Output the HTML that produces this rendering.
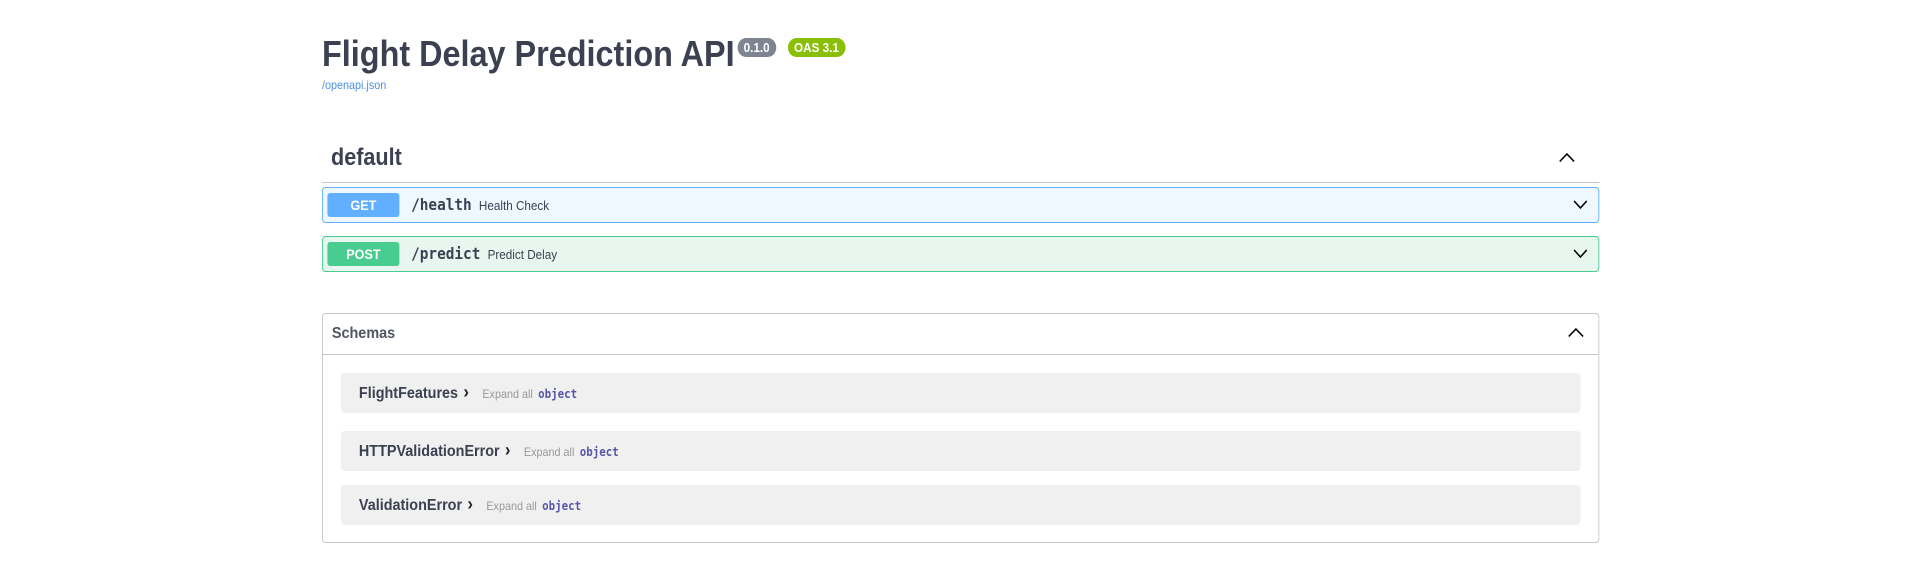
<!DOCTYPE html>
<html><head><meta charset="utf-8"><style>
html,body{margin:0;padding:0;background:#fff;overflow:hidden}
body{width:1916px;height:563px}
#s{width:2130px;transform:scaleX(0.8995);transform-origin:0 0;font-family:"Liberation Sans",Arial,sans-serif;color:#3b4151}
.w{max-width:1420px;margin:0 auto;padding:0 20px;position:relative;left:3px;height:563px}
.abs{position:absolute}
h2{position:absolute;left:20px;top:32px;margin:0;font-size:36px;font-weight:bold;line-height:44px;white-space:nowrap}
.b{display:inline-block;vertical-align:top;position:relative;top:6px;height:19px;line-height:19px;padding:0 7px;border-radius:10px;color:#fff;font-size:13px;font-weight:bold;margin-left:3px}
.lnk{left:20px;top:78px;font-size:12px;color:#4990e2}
.tag{left:30px;top:144px;font-size:24px;font-weight:bold}
.hr{left:20px;right:20px;top:182px;height:1px;background:#c4c6ca}
.op{position:absolute;left:20px;right:20px;height:34px;border:1px solid;border-radius:4px}
.m{position:absolute;left:5px;top:5px;width:80px;height:24px;line-height:24px;border-radius:3px;color:#fff;font-weight:bold;font-size:14px;text-align:center}
.p{position:absolute;left:98px;top:7px;font-family:"DejaVu Sans Mono","Liberation Mono",monospace;font-weight:bold;font-size:16px;white-space:nowrap}
.p span{font-family:"Liberation Sans",sans-serif;font-weight:normal;font-size:13px;margin-left:8px}
.chev{position:absolute;right:12px;top:12px}
.sch{position:absolute;left:20px;right:20px;top:313px;height:228px;border:1px solid #c4c6ca;border-radius:4px}
.sh{position:absolute;left:0;right:0;top:0;height:40px;border-bottom:1px solid #c4c6ca}
.sh b{position:absolute;left:10px;top:11px;font-size:16px;color:#505561}
.row{position:absolute;left:20px;right:20px;height:40px;background:#f0f0f0;border-radius:4px}
.row .n{position:absolute;left:20px;top:11px;font-size:16px;font-weight:bold;white-space:nowrap}
.row .n i{font-style:normal;display:inline-block;margin:0 15px 0 6px;font-size:18px;line-height:16px;font-weight:bold;color:#222}
.row .e{font-size:12px;font-weight:normal;color:#999;margin-right:6px}
.row .o{font-family:"DejaVu Sans Mono","Liberation Mono",monospace;font-size:12px;color:#55a;font-weight:bold}
</style></head><body><div id="s"><div class="w">
<h2>Flight Delay Prediction API<span class="b" style="background:#7d8492">0.1.0</span> <span class="b" style="background:#89bf04">OAS 3.1</span></h2>
<div class="abs lnk">/openapi.json</div>
<div class="abs tag">default</div>
<svg class="abs" style="right:47px;top:153px" width="18" height="9" viewBox="0 0 18 9"><path d="M1 8.5L9 1L17 8.5" fill="none" stroke="#000" stroke-width="1.6"/></svg>
<div class="abs hr"></div>
<div class="op" style="top:187px;border-color:#61affe;background:#eff7ff"><div class="m" style="background:#61affe">GET</div><div class="p">/health<span>Health Check</span></div><svg class="chev" width="16" height="10" viewBox="0 0 16 10"><path d="M1 1L8 8L15 1" fill="none" stroke="#000" stroke-width="1.6"/></svg></div>
<div class="op" style="top:236px;border-color:#49cc90;background:#e8f6f0"><div class="m" style="background:#49cc90">POST</div><div class="p">/predict<span>Predict Delay</span></div><svg class="chev" width="16" height="10" viewBox="0 0 16 10"><path d="M1 1L8 8L15 1" fill="none" stroke="#000" stroke-width="1.6"/></svg></div>
<div class="sch">
<div class="sh"><b>Schemas</b><svg class="abs" style="right:16px;top:14px" width="18" height="9" viewBox="0 0 18 9"><path d="M1 8.5L9 1L17 8.5" fill="none" stroke="#000" stroke-width="1.6"/></svg></div>
<div class="row" style="top:59px"><div class="n">FlightFeatures<i>&#x203A;</i><span class="e">Expand all</span><span class="o">object</span></div></div>
<div class="row" style="top:117px"><div class="n">HTTPValidationError<i>&#x203A;</i><span class="e">Expand all</span><span class="o">object</span></div></div>
<div class="row" style="top:171px"><div class="n">ValidationError<i>&#x203A;</i><span class="e">Expand all</span><span class="o">object</span></div></div>
</div>
</div></div></body></html>
